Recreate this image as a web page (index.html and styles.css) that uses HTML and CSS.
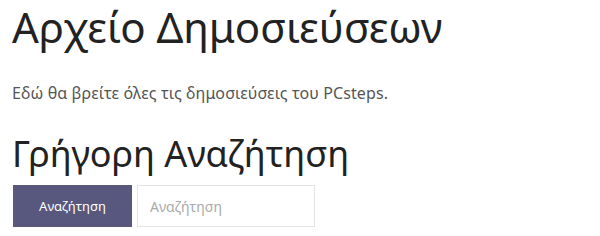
FILE: index.html
```html
<!DOCTYPE html>
<html lang="el">
	<head>
		<meta charset="UTF-8" />
		<meta name="viewport" content="width=device-width, initial-scale=1.0" />
		<link rel="stylesheet" href="styles.css">
		<title>Αρχείο Δημοσιεύσεων</title>
	</head>
	<body>
		<div class="archive">
			<h1 class="title">Αρχείο Δημοσιεύσεων</h1>
			<p class="intro">Εδώ θα βρείτε όλες τις δημοσιεύσεις του PCsteps.</p>
			<h2 class="subtitle">Γρήγορη Αναζήτηση</h2>
			<form class="search" onsubmit="return false">
				<button class="search_btn" type="submit">Αναζήτηση</button>
				<input class="search_input" type="text" placeholder="Αναζήτηση" />
			</form>
		</div>
	</body>
</html>
```

FILE: styles.css
```css
* {
	margin: 0;
	padding: 0;
	box-sizing: border-box;
}
body {
	background: #fff;
	font-family: "Noto Sans", "Open Sans", sans-serif;
	color: #222;
}
.archive {
	padding: 0 12px;
}
.title {
	font-weight: 400;
	font-size: 42px;
	line-height: 54px;
	color: #222;
}
.intro {
	margin-top: 27px;
	font-size: 16px;
	line-height: 24px;
	color: #555;
	letter-spacing: 0.1px;
}
.subtitle {
	margin-top: 26px;
	font-weight: 400;
	font-size: 36px;
	line-height: 46px;
	color: #222;
}
.search {
	display: flex;
	gap: 5px;
	margin-top: 8px;
	padding-left: 1px;
}
.search_btn {
	width: 119px;
	height: 42px;
	border: none;
	background-color: #58587e;
	color: #fff;
	font-family: inherit;
	font-size: 13px;
	cursor: pointer;
}
.search_input {
	width: 178px;
	height: 42px;
	border: 1px solid #e3e3e3;
	padding: 0 12px;
	font-family: inherit;
	font-size: 14px;
	color: #333;
}
.search_input::placeholder {
	color: #aaa;
}
```
